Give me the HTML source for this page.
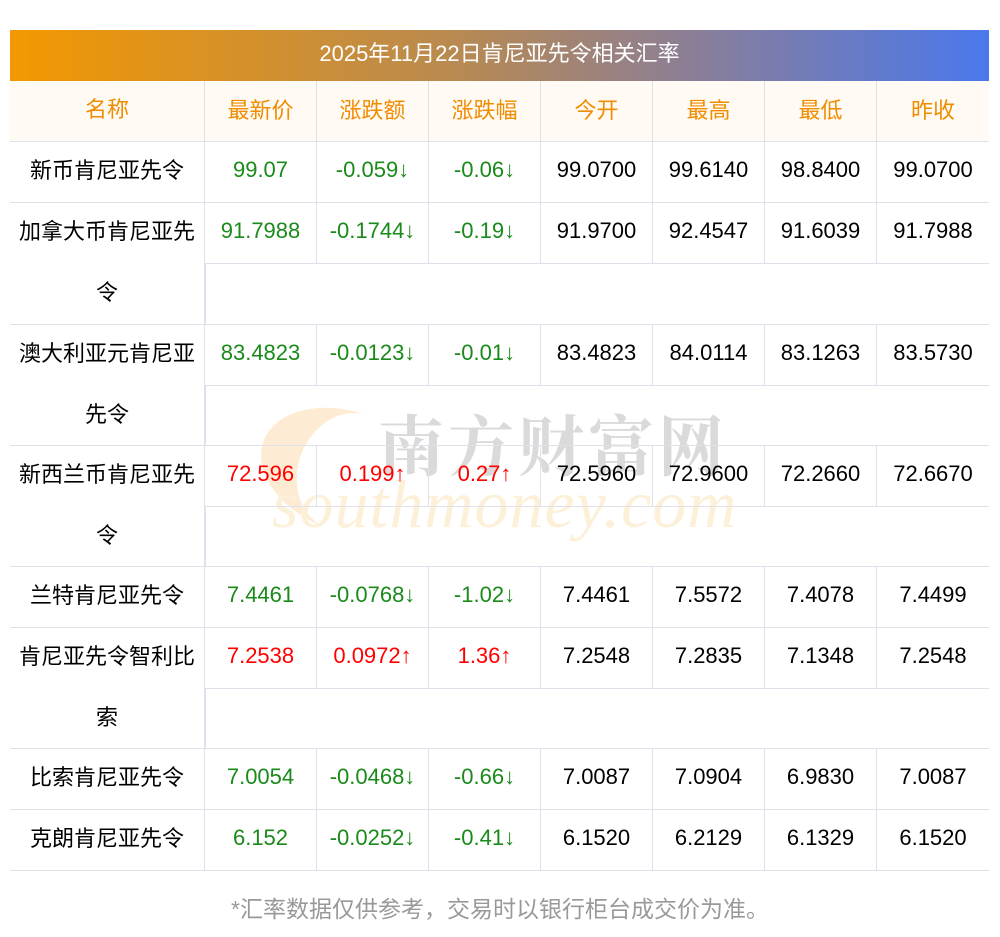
<!DOCTYPE html><html><head><meta charset="utf-8"><style>
body{margin:0;width:1000px;height:937px;background:#fff;font-family:"Liberation Sans","Noto Sans CJK SC",sans-serif;position:relative;overflow:hidden}
.hd{position:absolute;left:10px;top:30px;width:979px;height:51px;background:linear-gradient(90deg,#f39800,#b98a50 45%,#8a7e98 70%,#4a78ec);color:#fff;font-size:22px;text-align:center;line-height:47px}
.c{position:absolute;display:flex;align-items:center;justify-content:center;font-size:22px;box-sizing:border-box;border-bottom:1px solid #dfe1ea;padding-bottom:4px}
.v{border-right:1px solid #dfe1ea}
.g{color:#1a8a1a}.r{color:#f00}
.th{background:#fffaf3;color:#f08c00}
.nm{position:relative;top:-2px}
.wm1{position:absolute;left:378px;top:402px;font-size:66px;color:#d4d4d4;letter-spacing:4px;font-family:"Noto Serif CJK SC",serif;font-weight:bold;opacity:.85;line-height:80px}
.wm2{position:absolute;left:272px;top:465px;font-size:68px;color:#fdf0d8;font-family:"Liberation Serif",serif;font-style:italic;letter-spacing:1px}
.wmS{position:absolute;left:258px;top:412px;width:140px;height:120px;border-radius:50%;border-left:40px solid #fdebcf;transform:rotate(20deg);opacity:.9}
.ft{position:absolute;top:890px;left:0;width:1000px;text-align:center;color:#999;font-size:23px}
</style></head><body>
<div class="wmS"></div><div class="wm2">southmoney.com</div><div class="wm1">南方财富网</div>
<div class="hd">2025年11月22日肯尼亚先令相关汇率</div>
<div id="t"></div>
<div class="ft">*汇率数据仅供参考，交易时以银行柜台成交价为准。</div>
<script>
var xs=[10,205,317,429,541,653,765,877,989];
var rows=[
["th","名称","最新价","涨跌额","涨跌幅","今开","最高","最低","昨收",81,61],
["g","新币肯尼亚先令","99.07","-0.059↓","-0.06↓","99.0700","99.6140","98.8400","99.0700",142,61],
["g","加拿大币肯尼亚先<br>令","91.7988","-0.1744↓","-0.19↓","91.9700","92.4547","91.6039","91.7988",203,122],
["g","澳大利亚元肯尼亚<br>先令","83.4823","-0.0123↓","-0.01↓","83.4823","84.0114","83.1263","83.5730",325,121],
["r","新西兰币肯尼亚先<br>令","72.596","0.199↑","0.27↑","72.5960","72.9600","72.2660","72.6670",446,121],
["g","兰特肯尼亚先令","7.4461","-0.0768↓","-1.02↓","7.4461","7.5572","7.4078","7.4499",567,61],
["r","肯尼亚先令智利比<br>索","7.2538","0.0972↑","1.36↑","7.2548","7.2835","7.1348","7.2548",628,121],
["g","比索肯尼亚先令","7.0054","-0.0468↓","-0.66↓","7.0087","7.0904","6.9830","7.0087",749,61],
["g","克朗肯尼亚先令","6.152","-0.0252↓","-0.41↓","6.1520","6.2129","6.1329","6.1520",810,61]];
var h="";
rows.forEach(function(r){var y=r[9],H=r[10],th=r[0]=="th";
for(var i=0;i<8;i++){var hh=(i==0?H:61);var cls="c"+(i<7?" v":"")+(th?" th":"")+(i>0&&i<4&&!th?" "+r[0]:"");
if(i==7&&!th)cls="c";
var txt=i==0?'<div class="nm">'+r[i+1]+'</div>':r[i+1];
h+='<div class="'+cls+'" style="left:'+xs[i]+'px;top:'+y+'px;width:'+(xs[i+1]-xs[i])+'px;height:'+hh+'px;'+(i==0?'line-height:61px;text-align:center;display:block;padding:0':'')+'">'+txt+'</div>';}
if(H>61)h+='<div class="c" style="left:205px;top:'+(y+61)+'px;width:784px;height:'+(H-61)+'px;border-left:1px solid #dfe1ea"></div>';});
document.getElementById("t").innerHTML=h;
</script></body></html>
